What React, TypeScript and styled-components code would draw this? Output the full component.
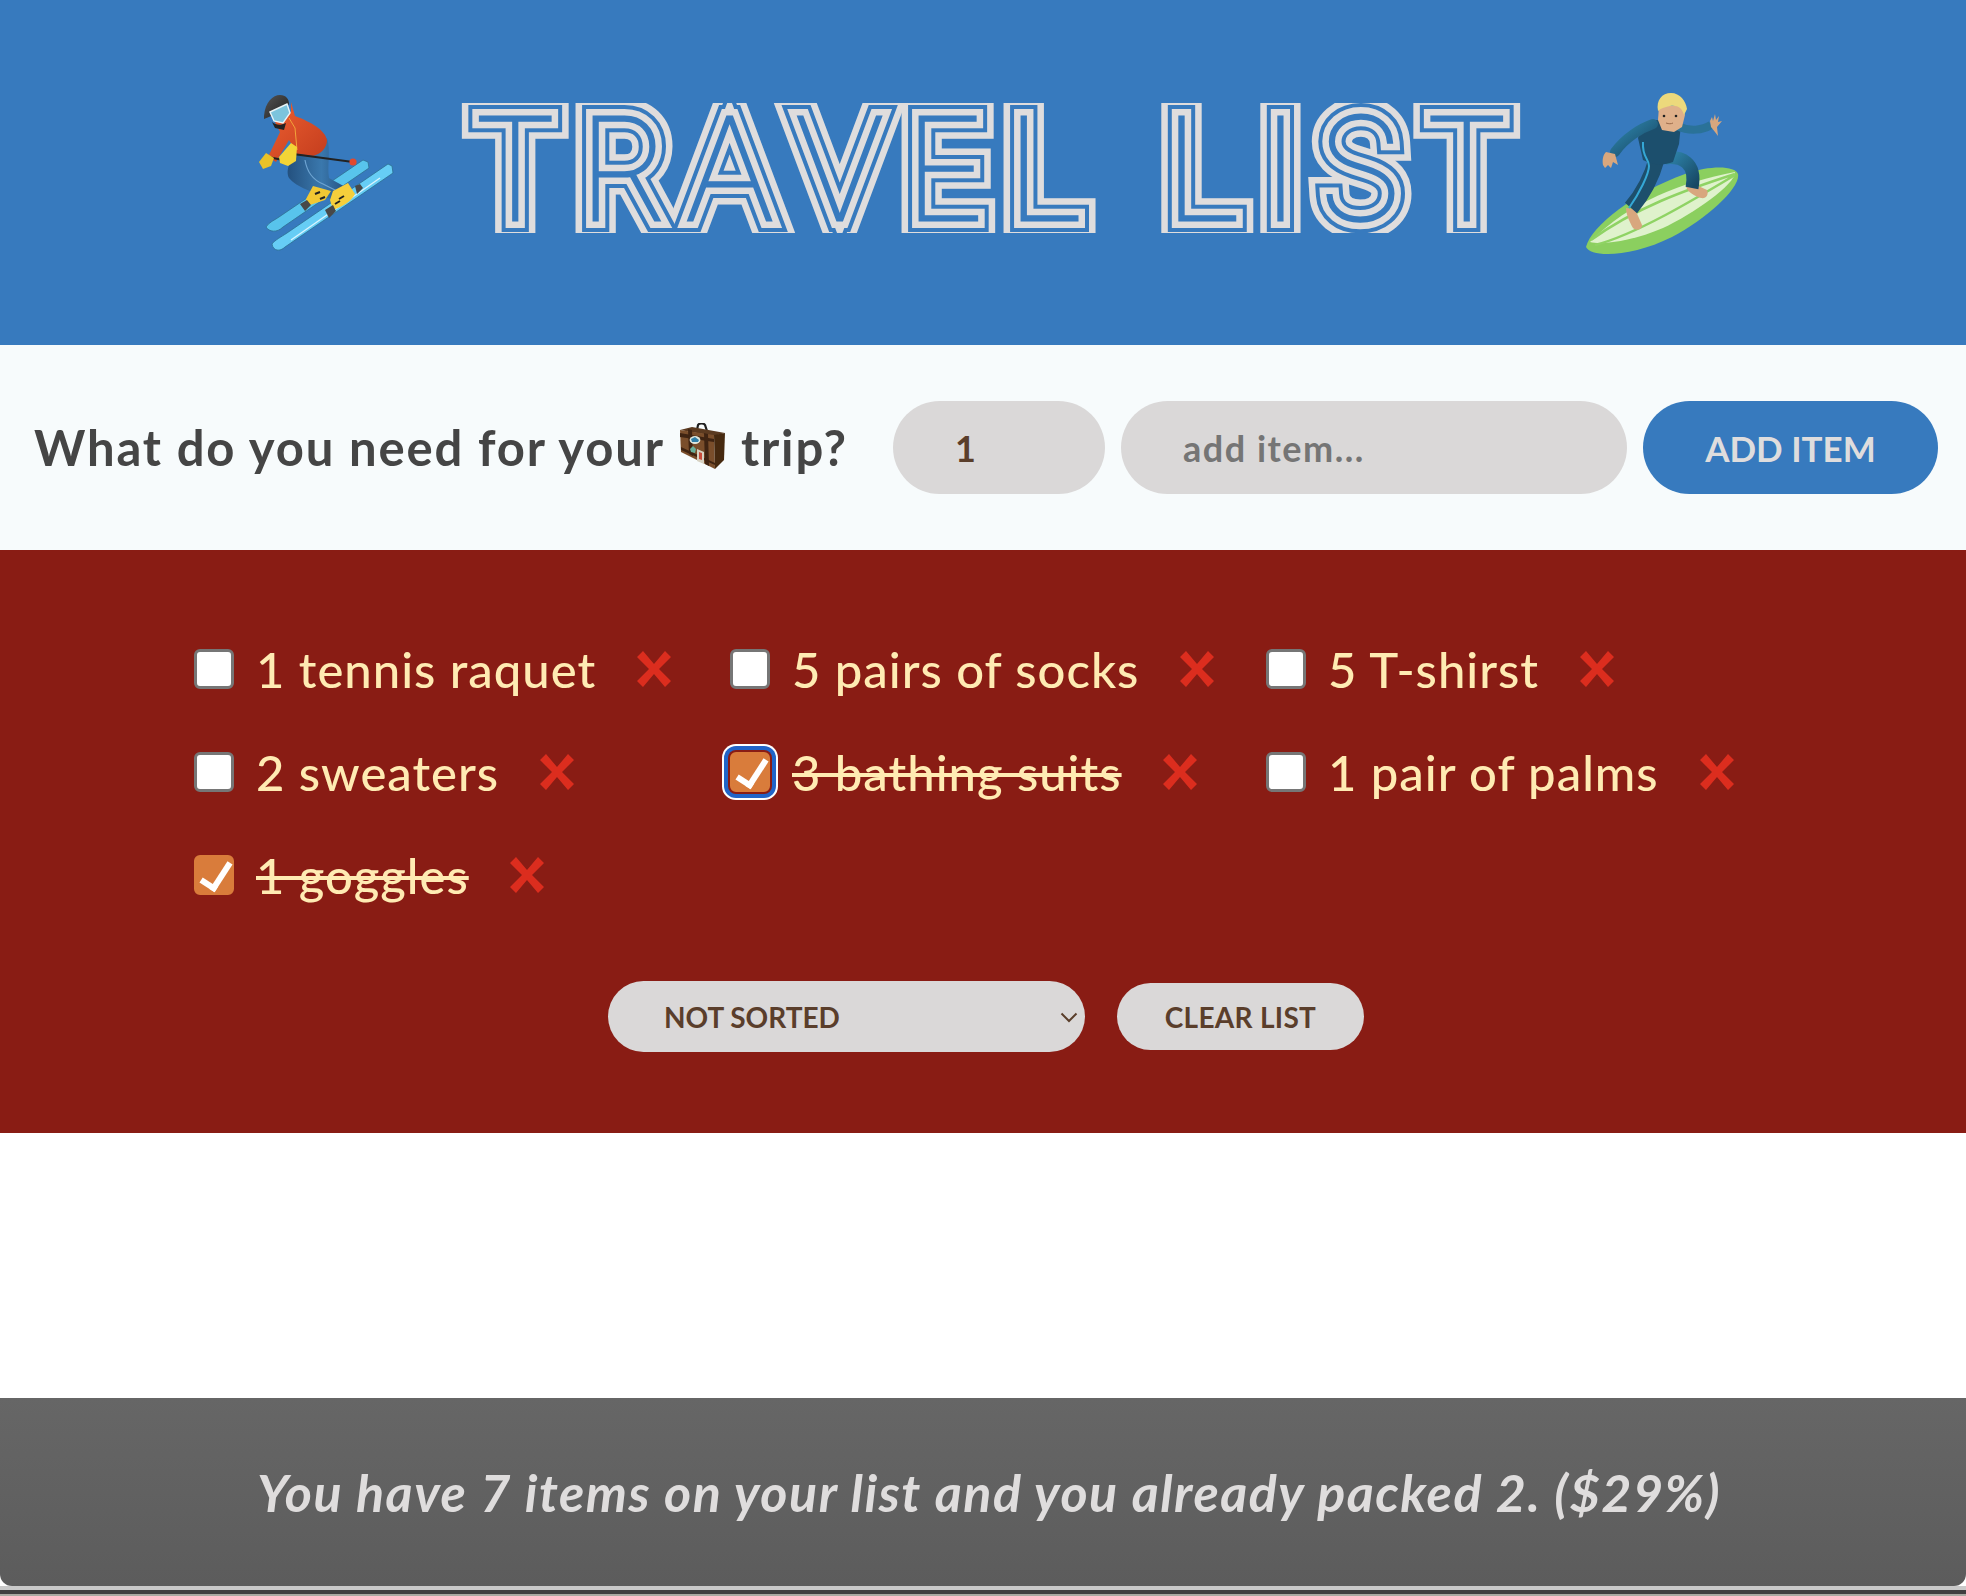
import React from "react";
import styled, { createGlobalStyle } from "styled-components";

const Global = createGlobalStyle`
  html, body { margin: 0; padding: 0; background: #fff; }
  body { font-family: "Lato", "Open Sans", sans-serif; }
  * { box-sizing: border-box; }
`;

const Page = styled.div`
  width: 1966px;
  height: 1596px;
  display: flex;
  flex-direction: column;
  overflow: hidden;
  background: #fff;
`;

const Header = styled.header`
  height: 345px;
  flex: none;
  background: #377abe;
  display: flex;
  align-items: center;
  justify-content: center;
  gap: 66px;
  padding-left: 31px;
`;

const Title = styled.h1`
  position: relative;
  margin: 0 0 9px;
  width: 1058px;
  height: 130px;
  clip-path: inset(0 -30px);
  text-align: center;
  text-indent: 11px;
  white-space: pre;
  font-family: "Inter", sans-serif;
  font-weight: 100;
  font-size: 142px;
  line-height: 130px;
  letter-spacing: 19px;
  font-kerning: none;
`;

const TitleLayer = styled.span<{ $w: number; $c: string }>`
  position: absolute;
  inset: 0;
  color: ${(p) => p.$c};
  -webkit-text-stroke: ${(p) => p.$w}px ${(p) => p.$c};
`;

const Form = styled.form`
  height: 205px;
  flex: none;
  background: #f7fbfc;
  display: flex;
  align-items: center;
  gap: 16px;
  padding: 0 28px 0 34px;
  margin: 0;
`;

const Question = styled.h3`
  margin: 0 0 2px;
  flex: 1;
  display: flex;
  align-items: center;
  gap: 15px;
  font-size: 49px;
  font-weight: 700;
  letter-spacing: 1.85px;
  color: #454545;
  white-space: nowrap;
`;

const Pill = styled.input<{ $w: number }>`
  width: ${(p) => p.$w}px;
  height: 93px;
  border: 0;
  border-radius: 46.5px;
  background: #dad8d8;
  color: #5a3e2b;
  font: 700 36px "Lato", sans-serif;
  letter-spacing: 1.5px;
  padding: 0 62px;
  outline: none;
  &::placeholder { color: #757575; opacity: 1; }
`;

const AddButton = styled.button`
  width: 295px;
  height: 93px;
  border: 0;
  border-radius: 46.5px;
  background: #377abe;
  color: #dfdddd;
  font: 700 35px "Lato", sans-serif;
  text-transform: uppercase;
`;

const ListSection = styled.section`
  height: 583px;
  flex: none;
  background: #891c14;
  display: flex;
  flex-direction: column;
  padding: 92px 195px 0 194px;
`;

const Items = styled.ul`
  list-style: none;
  margin: 0;
  padding: 0;
  display: grid;
  grid-template-columns: repeat(3, 536px);
  grid-auto-rows: 103px;
  height: 309px;
`;

const Item = styled.li`
  display: flex;
  align-items: center;
  height: 54px;
`;

const Check = styled.input<{ $focus?: boolean }>`
  appearance: none;
  position: relative;
  width: 40px;
  height: 40px;
  margin: 0 22px 0 0;
  flex: none;
  background: #fff;
  border: 3px solid #767676;
  border-radius: 6px;
  &:checked {
    background: #d97c3b;
    border-color: #d97c3b;
  }
  &:checked::after {
    content: "";
    position: absolute;
    left: 10px;
    top: -1px;
    width: 12px;
    height: 27px;
    border: solid #fff;
    border-width: 0 6px 6px 0;
    transform: rotate(33deg);
  }
  ${(p) => p.$focus && "box-shadow: 0 0 0 2px #891c14, 0 0 0 6px #2164c8, 0 0 0 8px #fff;"}
`;

const Label = styled.span<{ $done?: boolean }>`
  font-size: 49px;
  font-weight: 500;
  letter-spacing: 1px;
  color: #ffebb3;
  white-space: nowrap;
  text-decoration: ${(p) => (p.$done ? "line-through" : "none")};
  text-decoration-thickness: 4px;
`;

const Delete = styled.button`
  border: 0;
  background: none;
  padding: 0;
  margin-left: 40px;
  width: 36px;
  height: 36px;
  color: #dc2d1e;
  display: flex;
`;

const Actions = styled.div`
  display: flex;
  align-items: center;
  justify-content: center;
  gap: 32px;
  padding-left: 7px;
  margin-top: 30px;
`;

const SelectWrap = styled.div`
  position: relative;
  width: 477px;
  height: 71px;
`;

const Select = styled.select`
  appearance: none;
  width: 100%;
  height: 100%;
  border: 0;
  border-radius: 35.5px;
  background: #dad8d8;
  color: #5a3e2b;
  font: 700 28px "Lato", sans-serif;
  text-transform: uppercase;
  padding: 0 40px 0 56px;
`;

const Chevron = styled.svg`
  position: absolute;
  right: 7px;
  top: 31px;
  color: #5a3e2b;
  pointer-events: none;
`;

const ClearButton = styled.button`
  width: 247px;
  height: 67px;
  border: 0;
  border-radius: 33.5px;
  background: #dad8d8;
  color: #5a3e2b;
  font: 700 28px "Lato", sans-serif;
  letter-spacing: 0.3px;
  text-transform: uppercase;
`;

const Spacer = styled.div`
  flex: 1;
  background: #fff;
`;

const Stats = styled.footer`
  height: 188px;
  flex: none;
  background: linear-gradient(#666666, #5c5c5c);
  border-radius: 0 0 12px 12px;
  display: flex;
  align-items: center;
  justify-content: center;
  padding-left: 12px;
  font-size: 52px;
  font-style: italic;
  font-weight: 700;
  letter-spacing: 1.5px;
  color: #dfdddd;
`;

const WindowEdge = styled.div`
  height: 10px;
  flex: none;
  background: linear-gradient(#c9c9c9 0 4px, #3f3f3f 4px 8px, #a9a9a1 8px);
`;

const Skier = () => (
  <svg width="140" height="157" viewBox="0 0 140 157">
    <defs>
      <linearGradient id="sj" x1="0" y1="0" x2="1" y2="1">
        <stop offset="0" stopColor="#ec5f31" /><stop offset="1" stopColor="#c33c1d" />
      </linearGradient>
      <linearGradient id="sp" x1="0" y1="0" x2="1" y2="0">
        <stop offset="0" stopColor="#24517f" /><stop offset=".55" stopColor="#3a78ad" /><stop offset="1" stopColor="#234e7c" />
      </linearGradient>
      <linearGradient id="sh" x1="0" y1="0" x2="1" y2="1">
        <stop offset="0" stopColor="#555" /><stop offset="1" stopColor="#1e1e1e" />
      </linearGradient>
    </defs>
    <path d="M108 66l5 2 1 6-86 59c-6 6-14 5-17 0 3-5 9-7 13-10z" fill="#58c4ec" stroke="#2f6f90" strokeWidth=".8" />
    <path d="M133 70l4 2 1 7L30 153c-5 5-12 4-13-3 3-4 9-7 15-11z" fill="#66cdf5" stroke="#2b6f91" strokeWidth=".8" />
    <path d="M125 84L36 146" stroke="#d9f5ff" strokeWidth="1.4" />
    <path d="M72 44c4 12 0 28 2 40l20 11-8 13-20-6c-6-4-24-8-32-18-4-8 2-20 8-24z" fill="url(#sp)" />
    <path d="M50 66c2 12 8 20 18 24l20 10" fill="none" stroke="#6ea4d2" strokeWidth="1.2" />
    <path d="M58 92l18 5-6 9-18 6-1-7z" fill="#f2c833" />
    <path d="M93 89l7 11c-4 8-12 12-22 16l-3-10 3-9z" fill="#f6cf3b" />
    <path d="M45 110l7-4 4 5-6 6zM70 116l8-5 3 6-7 7zM100 92l5-2 3 4-6 6z" fill="#484848" />
    <path d="M60 100l5-2M65 105l5-2M84 105l5-3M80 110l5-3" stroke="#222" strokeWidth="2" />
    <path d="M36 8l4 14c16 6 30 14 32 24 0 8-6 14-14 16l-16-2-8-14-13 22-8-5 12-25-5-10c2-8 10-8 16-10z" fill="url(#sj)" />
    <path d="M34 24l6 10 2 22" fill="none" stroke="#f2a33a" strokeWidth="1" />
    <path d="M13 63l25 5M38 60l60 8" stroke="#222" strokeWidth="2.2" />
    <circle cx="98" cy="68" r="3.6" fill="#e2492d" />
    <path d="M11 59l8 5-3 8-8 3-4-7z" fill="#e9c228" />
    <path d="M24 63l12-14 6 4-1 14-8 5-8-3z" fill="#f3d436" />
    <path d="M9 22C10 8 18 1 25 1c6 0 9 4 9 9-3 6-11 9-25 15z" fill="url(#sh)" />
    <path d="M15 18l17-8 3 9-7 10-9-2z" fill="#7cc4dd" stroke="#e8f3f6" strokeWidth="1.4" />
    <path d="M17 28c4 3 8 4 14 1l-2 7-9-2z" fill="#222" />
  </svg>
);

const Surfer = () => (
  <svg width="158" height="165" viewBox="0 0 158 165">
    <defs>
      <linearGradient id="sf" x1="0" y1="0" x2="1" y2="1">
        <stop offset="0" stopColor="#2f86ad" /><stop offset="1" stopColor="#174864" />
      </linearGradient>
    </defs>
    <path d="M1 157C6 136 50 102 100 84c26-9 50-8 53 0 3 13-30 44-66 63-40 20-81 21-86 10z" fill="#8bcf5f" />
    <path d="M5 152C44 112 98 92 150 82c1 12-42 42-72 56-30 13-60 17-73 14z" fill="#dff2cc" />
    <path d="M6 150C50 118 100 100 150 84M10 155c40-10 100-46 140-70" stroke="#8fd364" strokeWidth="2.5" fill="none" />
    <path d="M101 96l8-2 13 6c2 5-1 9-6 8-6-2-14-6-15-12zM41 118l9 1 7 16c0 5-6 6-9 3-3-5-7-14-7-20z" fill="#d8a77e" />
    <path d="M72 68c-6 22-14 36-26 50" stroke="#1d4f6c" strokeWidth="16" fill="none" />
    <path d="M80 68c16-2 32 4 27 30" stroke="url(#sf)" strokeWidth="13" fill="none" />
    <path d="M53 48C56 38 66 30 72 30l24 4-2 20-6 18c-10 4-20 3-30-2z" fill="#1c4f6d" />
    <path d="M68 34C56 38 40 48 30 62" stroke="url(#sf)" strokeWidth="10" strokeLinecap="round" fill="none" />
    <path d="M92 36c13 6 26 4 34-1" stroke="#2a7298" strokeWidth="8" fill="none" />
    <path d="M58 52c-1 16 6 16 6 24s-10 28-20 42" stroke="#35a8d6" strokeWidth="2" fill="none" />
    <path d="M74 16l23 0 3 9-3 12-8 5-12-2-4-10z" fill="#dfb08a" />
    <path d="M73 21C71 10 77 3 86 3s15 8 16 16l-3 6c-2-7-6-10-14-9-4 1-9 2-12 5z" fill="#ecd97c" />
    <circle cx="79" cy="26" r="1.3" fill="#222" /><circle cx="91" cy="26" r="1.3" fill="#222" />
    <path d="M81 33c3 1 5 1 7 0" stroke="#9a6a4a" strokeWidth="1" fill="none" />
    <path d="M21 62l9 2 3 11-5-3-2 6-3-3-3 3-2-3c-1-5 0-10 3-13zM126 37l-1-6 2-4 1 4 2-7 1 6 3-4-1 6 4-1-5 6 1 9-3-4z" fill="#d8a77e" />
  </svg>
);

const Luggage = () => (
  <svg width="46" height="47" viewBox="0 0 46 47">
    <path d="M17 7l1-5c1-2 6-2 7 0l2 6" fill="none" stroke="#1f1f1f" strokeWidth="2.2" />
    <path d="M0 7l12-3 33 6-11 3z" fill="#5b3a20" />
    <path d="M0 7l34 5 1 34-34-17z" fill="#7a4e2b" />
    <path d="M34 12l11-2-1 27-9 9z" fill="#46290f" />
    <path d="M0 10l34 6v3L0 14zM1 24l34 16v2L1 27z" fill="#3f2412" />
    <path d="M8 6l4 1 1 26-4-2zM24 10l4 1 1 32-4-2z" fill="#3f2412" />
    <ellipse cx="15" cy="17" rx="5.4" ry="4" fill="#dfe8de" />
    <path d="M11 16l4-2 4 3-1 2h-6z" fill="#2f7fa8" />
    <path d="M17 26l7 3v12l-7-3z" fill="#d7d2c2" /><path d="M19 29l3 1v7l-3-1z" fill="#c94c3b" />
    <path d="M10 26l3-3 3 3-1 4-4-1z" fill="#69b09a" />
  </svg>
);

const Cross = () => (
  <svg width="36" height="36" viewBox="0 0 36 36">
    <path d="M7 0l11 13L29 0l6 6-12 12 12 12-6 6-11-13L7 36l-6-6 12-12L1 6z" fill="currentColor" />
  </svg>
);

const items = [
  { t: "1 tennis raquet" },
  { t: "5 pairs of socks" },
  { t: "5 T-shirst" },
  { t: "2 sweaters" },
  { t: "3 bathing suits", done: true, focus: true },
  { t: "1 pair of palms" },
  { t: "1 goggles", done: true },
];

const titleLayers = [
  { w: 37, c: "#dfdddd" },
  { w: 24, c: "#377abe" },
  { w: 16, c: "#dfdddd" },
  { w: 3, c: "#377abe" },
];

export default function App() {
  return (
    <Page>
      <Global />
      <Header>
        <Skier />
        <Title aria-label="TRAVEL LIST">
          {titleLayers.map((l) => (
            <TitleLayer key={l.w} $w={l.w} $c={l.c} aria-hidden="true">TRAVEL LIST</TitleLayer>
          ))}
        </Title>
        <Surfer />
      </Header>
      <Form onSubmit={(e) => e.preventDefault()}>
        <Question>
          <span>What do you need for your</span>
          <Luggage />
          <span>trip?</span>
        </Question>
        <Pill $w={212} defaultValue="1" />
        <Pill $w={506} placeholder="add item..." />
        <AddButton type="button">Add item</AddButton>
      </Form>
      <ListSection>
        <Items>
          {items.map((i) => (
            <Item key={i.t}>
              <Check type="checkbox" defaultChecked={i.done} $focus={i.focus} />
              <Label $done={i.done}>{i.t}</Label>
              <Delete type="button" aria-label="delete"><Cross /></Delete>
            </Item>
          ))}
        </Items>
        <Actions>
          <SelectWrap>
            <Select defaultValue="input">
              <option value="input">Not sorted</option>
            </Select>
            <Chevron width="18" height="11" viewBox="0 0 18 11">
              <path d="M1.5 1.5L9 9l7.5-7.5" fill="none" stroke="currentColor" strokeWidth="2" />
            </Chevron>
          </SelectWrap>
          <ClearButton type="button">Clear list</ClearButton>
        </Actions>
      </ListSection>
      <Spacer />
      <Stats>You have 7 items on your list and you already packed 2. ($29%)</Stats>
      <WindowEdge />
    </Page>
  );
}
